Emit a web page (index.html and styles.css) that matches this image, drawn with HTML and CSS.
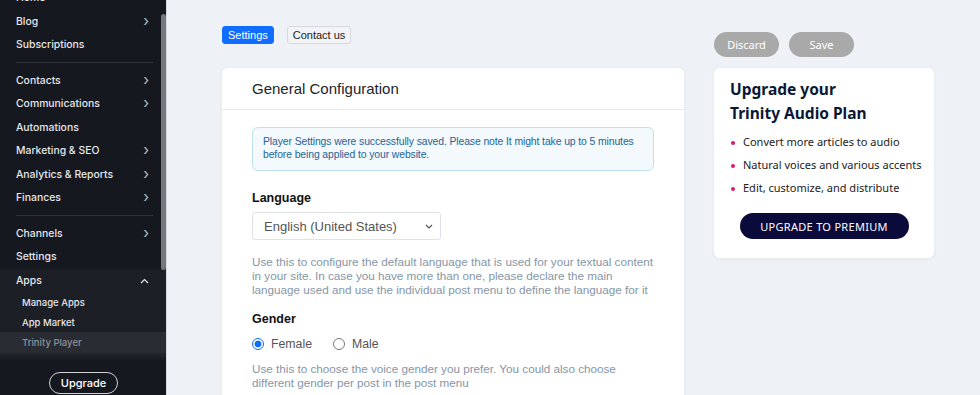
FILE: index.html
```html
<!DOCTYPE html>
<html lang="en">
<head>
<meta charset="UTF-8">
<meta name="viewport" content="width=device-width, initial-scale=1.0">
<title>Trinity Player Settings</title>
<link rel="stylesheet" href="styles.css">
</head>
<body>
<aside class="sidebar">
<ul class="menu">
<li class="menu-item">Home</li>
<li class="menu-item">Blog <span class="chev">&#8250;</span></li>
<li class="menu-item">Subscriptions</li>
<li class="divider"></li>
<li class="menu-item">Contacts <span class="chev">&#8250;</span></li>
<li class="menu-item">Communications <span class="chev">&#8250;</span></li>
<li class="menu-item">Automations</li>
<li class="menu-item">Marketing &amp; SEO <span class="chev">&#8250;</span></li>
<li class="menu-item">Analytics &amp; Reports <span class="chev">&#8250;</span></li>
<li class="menu-item">Finances <span class="chev">&#8250;</span></li>
<li class="divider"></li>
<li class="menu-item">Channels <span class="chev">&#8250;</span></li>
<li class="menu-item">Settings</li>
<li class="apps">
<div class="menu-item">Apps <span class="chev chev-up">
<svg width="9" height="6" viewBox="0 0 9 6"><path d="M1 5 L4.5 1.5 L8 5" fill="none" stroke="#e6e7ea" stroke-width="1.2"/></svg>
</span></div>
<div class="sub-item">Manage Apps</div>
<div class="sub-item">App Market</div>
<div class="sub-item current">Trinity Player</div>
</li>
</ul>
<div class="fade"></div>
<div class="upgrade-wrap"><button class="upgrade-btn">Upgrade</button></div>
<div class="scrollbar"></div>
</aside>

<main class="content">
<section class="main-col">
<div class="tabs">
<button class="tab active">Settings</button>
<button class="tab">Contact us</button>
</div>
<div class="card">
<div class="card-header">General Configuration</div>
<div class="card-body">
<div class="alert">Player Settings were successfully saved. Please note It might take up to 5 minutes before being applied to your website.</div>

<div class="field">
<label class="field-label" for="language">Language</label>
<div class="select">
<span>English (United States)</span>
<svg width="8" height="5" viewBox="0 0 8 5"><path d="M1 1 L4 4 L7 1" fill="none" stroke="#555" stroke-width="1.2"/></svg>
</div>
<p class="help">Use this to configure the default language that is used for your textual content in your site. In case you have more than one, please declare the main language used and use the individual post menu to define the language for it</p>
</div>

<div class="field">
<div class="field-label">Gender</div>
<div class="radios">
<span class="radio checked"></span><span class="radio-label">Female</span>
<span class="radio"></span><span class="radio-label">Male</span>
</div>
<p class="help">Use this to choose the voice gender you prefer. You could also choose different gender per post in the post menu</p>
</div>
</div>
</div>
</section>

<section class="side-col">
<div class="actions">
<button class="pill">Discard</button>
<button class="pill">Save</button>
</div>
<div class="promo">
<h2 class="promo-title">Upgrade your<br>Trinity Audio Plan</h2>
<ul class="promo-list">
<li>Convert more articles to audio</li>
<li>Natural voices and various accents</li>
<li>Edit, customize, and distribute</li>
</ul>
<div class="promo-action"><button class="premium-btn">UPGRADE TO PREMIUM</button></div>
</div>
</section>
</main>
</body>
</html>
```
FILE: styles.css
```css
* {
    box-sizing: border-box;
}

body {
    margin: 0;
    height: 395px;
    overflow: hidden;
    display: flex;
    background: #eef2f6;
}

button {
    font-family: inherit;
    cursor: pointer;
}

/* sidebar */
.sidebar {
    position: relative;
    width: 167px;
    flex-shrink: 0;
    background: #161820;
    color: #e6e7ea;
    font-family: Inter, "Noto Sans", sans-serif;
    font-size: 10.4px;
    font-weight: 500;
    border-right: 1px solid #d8dce2;
}

.menu {
    list-style: none;
    margin: -14px 0 0;
    padding: 0;
}

.menu-item {
    height: 23.4px;
    display: flex;
    align-items: center;
    justify-content: space-between;
    padding: 0 17px 0 16px;
}

.chev {
    font-size: 15px;
    font-weight: 400;
    color: #b9bbc1;
    line-height: 1;
    margin-top: -2px;
}

.chev-up {
    margin-top: 0;
    display: flex;
}

.divider {
    height: 1px;
    margin: 5.8px 13px 5.8px 16px;
    background: #30333b;
}

.apps {
    background: #1d1f27;
    margin-top: 0.4px;
}

.sub-item {
    height: 20px;
    display: flex;
    align-items: center;
    padding-left: 22px;
    font-size: 9.5px;
}

.sub-item.current {
    height: 21px;
    background: #2a2c33;
    color: #8e9098;
}

.fade {
    height: 8px;
    background: linear-gradient(#23252c, #161820);
}

.upgrade-wrap {
    display: flex;
    justify-content: center;
    padding-top: 11px;
}

.upgrade-btn {
    width: 69px;
    height: 22px;
    margin-left: 1px;
    border: 1px solid #d0d2d6;
    border-radius: 11px;
    background: transparent;
    color: #fff;
    font-size: 11px;
    font-weight: 500;
    padding: 0;
}

.scrollbar {
    position: absolute;
    top: 14px;
    left: 161px;
    width: 5px;
    height: 256px;
    border-radius: 3px;
    background: #76787d;
}

/* content */
.content {
    flex: 1;
    display: flex;
    gap: 30px;
    padding: 0 0 0 55px;
    font-family: "Liberation Sans", Arial, sans-serif;
}

.main-col {
    width: 462px;
    padding-top: 26px;
}

.tabs {
    display: flex;
    gap: 13px;
    margin-bottom: 24px;
}

.tab {
    height: 18px;
    padding: 0 5px;
    font-size: 11px;
    border: 1px solid #d6dae0;
    border-radius: 3px;
    background: #f1f3f6;
    color: #222;
}

.tab.active {
    background: #116dff;
    border-color: #116dff;
    color: #fff;
}

.card {
    background: #fff;
    border-radius: 6px;
    box-shadow: 0 1px 4px rgba(30, 50, 80, 0.06);
    height: 340px;
}

.card-header {
    height: 42px;
    display: flex;
    align-items: center;
    padding-left: 30px;
    font-size: 15px;
    color: #212529;
    border-bottom: 1px solid #e8ebee;
}

.card-body {
    padding: 17px 30px 0;
}

.alert {
    padding: 8px 10px 9px;
    font-size: 10.4px;
    letter-spacing: -0.1px;
    line-height: 12.5px;
    color: #22649a;
    background: #f3f9fc;
    border: 1px solid #bfe0ee;
    border-radius: 6px;
}

.field {
    margin-top: 20px;
}

.field + .field {
    margin-top: 15px;
}

.field-label {
    display: block;
    font-size: 12.5px;
    font-weight: bold;
    color: #111;
    margin-bottom: 7px;
}

.select {
    width: 189px;
    height: 28px;
    display: flex;
    align-items: center;
    justify-content: space-between;
    padding: 0 7px 0 11px;
    border: 1px solid #dfe2e6;
    border-radius: 3px;
    font-size: 13px;
    color: #555;
}

.help {
    margin: 15px 0 0;
    font-size: 11.7px;
    line-height: 14px;
    color: #8696a6;
}

.radios {
    display: flex;
    align-items: center;
    height: 18px;
    margin-top: 9px;
    font-size: 12.3px;
    color: #555;
}

.radios + .help {
    margin-top: 9px;
}

.radio {
    width: 12px;
    height: 12px;
    margin-left: 0;
    border: 1px solid #777;
    border-radius: 50%;
}

.radio.checked {
    border: 1px solid #116dff;
    background: radial-gradient(circle, #116dff 0 3.2px, #fff 3.7px);
}

.radio-label {
    margin: 0 21px 0 7px;
}

/* right column */
.side-col {
    width: 220px;
    padding-top: 32px;
    font-family: "Noto Sans", sans-serif;
}

.actions {
    display: flex;
    gap: 10px;
    margin-bottom: 11px;
}

.pill {
    width: 65px;
    height: 25px;
    border: none;
    border-radius: 13px;
    background: #a9a9a9;
    color: #fff;
    font-size: 11px;
    font-weight: 400;
}

.promo {
    background: #fff;
    border-radius: 6px;
    padding: 9px 8px 19px 16px;
    box-shadow: 0 1px 4px rgba(30, 50, 80, 0.06);
}

.promo-title {
    margin: 0;
    font-size: 15.5px;
    line-height: 24px;
    font-weight: 700;
    color: #0b1833;
}

.promo-list {
    list-style: none;
    margin: 5px 0 0;
    padding: 0;
    font-size: 11px;
    line-height: 23px;
    color: #222;
    white-space: nowrap;
}

.promo-list li::before {
    content: "";
    display: inline-block;
    width: 4px;
    height: 4px;
    margin: 0 8px 1px 1px;
    border-radius: 50%;
    background: #e0166d;
    vertical-align: middle;
}

.promo-action {
    display: flex;
    justify-content: center;
    margin: 14px 0 0 -8px;
}

.premium-btn {
    width: 169px;
    height: 26px;
    border: none;
    border-radius: 13px;
    background: #0b0b3b;
    color: #fff;
    font-size: 11px;
    letter-spacing: 0.3px;
}
```
